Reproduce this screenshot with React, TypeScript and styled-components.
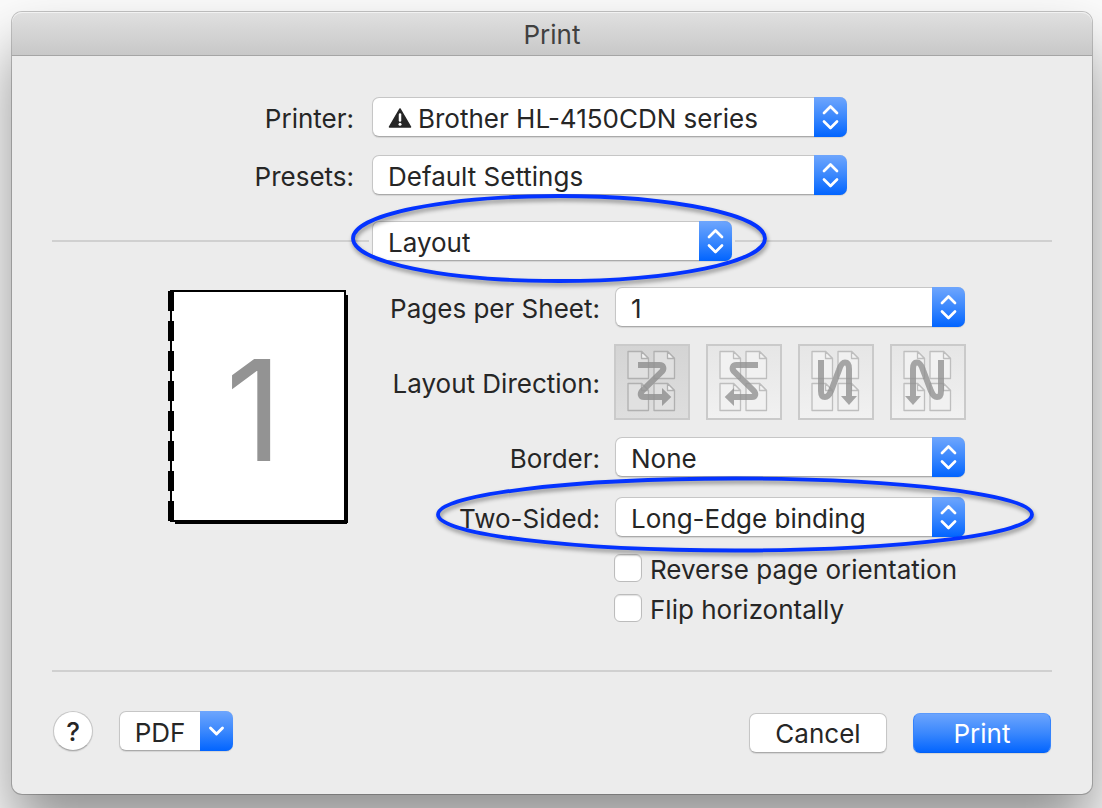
import React, { useId } from "react";
import styled, { createGlobalStyle, css } from "styled-components";

const GlobalStyle = createGlobalStyle`
  *, *::before, *::after { box-sizing: border-box; }
  body {
    margin: 0;
    background: #fbfbfb;
    color: #262626;
    font-family: Inter, "Liberation Sans", sans-serif;
    font-size: 26px;
    line-height: 30px;
  }
  button, select, input { font: inherit; color: inherit; margin: 0; }
`;

const blueFill = "linear-gradient(#6ea6fd, #3b88fd 50%, #0164ff)";

const Stage = styled.div`
  padding: 12px 10px 14px 12px;
  overflow: hidden;
`;

const Dialog = styled.main`
  border-radius: 10px;
  background: #ececec;
  box-shadow: 0 0 0 1px rgba(0, 0, 0, 0.22), 0 36px 60px rgba(0, 0, 0, 0.42);
`;

const TitleBar = styled.header`
  height: 44px;
  padding-top: 8px;
  border-radius: 10px 10px 0 0;
  border-bottom: 1px solid #a5a5a5;
  background: linear-gradient(#e0e0e0, #c8c8c8);
  box-shadow: inset 0 1px 0 #f2f2f2;
  text-align: center;
`;

const Title = styled.h1`
  margin: 0;
  font-size: 26px;
  font-weight: 400;
  line-height: 30px;
  color: #404040;
`;

const Body = styled.form`
  padding: 41px 40px;
`;

const Rows = styled.div<{ $gap: number }>`
  display: flex;
  flex-direction: column;
  gap: ${(p) => p.$gap}px;
`;

const Row = styled.div<{ $label: number; $gap: number }>`
  display: grid;
  grid-template-columns: ${(p) => p.$label}px minmax(0, 1fr);
  column-gap: ${(p) => p.$gap}px;
  align-items: center;
`;

const Label = styled.label`
  padding-top: 4px;
  text-align: right;
  white-space: nowrap;
`;

const Caption = styled.span`
  padding-top: 4px;
  text-align: right;
  white-space: nowrap;
`;

const Popup = styled.div<{ $width: number }>`
  position: relative;
  flex: none;
  width: ${(p) => p.$width}px;
  height: 40px;
`;

const raised = css`
  border: 1px solid #c6c6c6;
  border-bottom-color: #aaa;
  border-radius: 7px;
  background: #fff;
  box-shadow: 0 1px 1px rgba(0, 0, 0, 0.1);
`;

const Select = styled.select<{ $icon?: boolean }>`
  ${raised}
  appearance: none;
  display: block;
  width: 100%;
  height: 40px;
  padding: 4px 40px 0 ${(p) => (p.$icon ? 45 : 15)}px;
`;

const Cap = styled.span<{ $inset?: number }>`
  position: absolute;
  top: -${(p) => p.$inset ?? 0}px;
  right: -${(p) => p.$inset ?? 0}px;
  display: grid;
  place-items: center;
  width: 33px;
  height: 40px;
  border-radius: 0 7px 7px 0;
  background: ${blueFill};
  pointer-events: none;
`;

const PopupIcon = styled.span`
  position: absolute;
  top: 11px;
  left: 16px;
  display: flex;
  pointer-events: none;
`;

const SectionRow = styled.div`
  display: flex;
  align-items: center;
  gap: 3px;
  margin: 26px 0;
`;

const Line = styled.span<{ $width?: number }>`
  ${(p) => (p.$width ? `flex: none; width: ${p.$width}px;` : "flex: 1;")}
  height: 2px;
  background: #d0d0d0;
`;

const Pane = styled.section`
  display: grid;
  grid-template-columns: 302px minmax(0, 1fr);
  align-items: start;
`;

const Preview = styled.div`
  padding: 3px 0 0 116px;
`;

const Directions = styled.div`
  display: flex;
  gap: 16px;
  margin-left: -1px;
`;

const DirectionButton = styled.button<{ $active: boolean }>`
  width: 76px;
  height: 76px;
  padding: 0;
  border: 2px solid #cacaca;
  background: ${(p) =>
    p.$active ? "linear-gradient(#d4d4d4, #dedede)" : "linear-gradient(#e6e6e6, #f1f1f1)"};
`;

const Checks = styled.div`
  display: flex;
  flex-direction: column;
  gap: 12px;
  padding-left: 260px;
`;

const CheckLabel = styled.label`
  display: flex;
  align-items: center;
  gap: 8px;
  height: 28px;
  white-space: nowrap;
`;

const CheckText = styled.span`
  padding-top: 4px;
`;

const Checkbox = styled.input`
  appearance: none;
  width: 28px;
  height: 28px;
  border: 1px solid #bcbcbc;
  border-radius: 6px;
  background: #fff;
  box-shadow: inset 0 1px 1px rgba(0, 0, 0, 0.12);
`;

const Divider = styled.hr`
  height: 2px;
  margin: 48px 0 39px;
  border: 0;
  background: #d0d0d0;
`;

const Footer = styled.footer`
  display: flex;
  align-items: flex-start;
`;

const HelpButton = styled.button`
  ${raised}
  width: 40px;
  height: 40px;
  margin: 0 26px 0 1px;
  padding: 2px 0 0;
  border-radius: 50%;
  font-weight: 500;
`;

const PdfButton = styled.button`
  ${raised}
  position: relative;
  width: 114px;
  height: 40px;
  padding: 4px 32px 0 0;
  text-align: center;
`;

const Actions = styled.div`
  display: flex;
  gap: 26px;
  margin: 2px 1px 0 auto;
`;

const ActionButton = styled.button<{ $primary?: boolean }>`
  ${raised}
  width: 138px;
  height: 40px;
  padding: 2px 0 0;
  ${(p) =>
    p.$primary &&
    css`
      border-color: #5b9afc #3583fc #0160f5;
      background: ${blueFill};
      background-origin: border-box;
      color: #fff;
    `}
`;

const Ring = styled.svg<{ $left: number; $top: number }>`
  position: absolute;
  left: ${(p) => p.$left}px;
  top: ${(p) => p.$top}px;
  z-index: 2;
  pointer-events: none;
  filter: drop-shadow(1px 3px 2px rgba(0, 0, 0, 0.4));
`;

function UpDown() {
  return (
    <svg width="17" height="26" viewBox="0 0 17 26" fill="none" stroke="#fff" strokeWidth="2.7" strokeLinecap="round" strokeLinejoin="round" aria-hidden="true">
      <path d="M2 9L8.500 2.500L15 9M2 17.500L8.500 24L15 17.500" />
    </svg>
  );
}

function Down() {
  return (
    <svg width="17" height="12" viewBox="0 0 17 12" fill="none" stroke="#fff" strokeWidth="2.900" strokeLinecap="round" strokeLinejoin="round" aria-hidden="true">
      <path d="M2.500 3L8.500 9L14.500 3" />
    </svg>
  );
}

function Warning() {
  return (
    <svg width="24" height="20" viewBox="0 0 24 20" aria-hidden="true">
      <path d="M12 1L22.500 19H1.500Z" fill="#262626" stroke="#262626" strokeWidth="1.500" strokeLinejoin="round" />
      <path d="M12 6.500V12.500" stroke="#fff" strokeWidth="2.500" strokeLinecap="round" />
      <circle cx="12" cy="16.300" r="1.500" fill="#fff" />
    </svg>
  );
}

type PopupSelectProps = {
  id: string;
  value: string;
  width: number;
  icon?: React.ReactNode;
  ariaLabel?: string;
  children?: React.ReactNode;
};

function PopupSelect({ id, value, width, icon, ariaLabel, children }: PopupSelectProps) {
  return (
    <Popup $width={width}>
      <Select id={id} $icon={!!icon} defaultValue={value} aria-label={ariaLabel}>
        <option>{value}</option>
      </Select>
      {icon && <PopupIcon>{icon}</PopupIcon>}
      <Cap>
        <UpDown />
      </Cap>
      {children}
    </Popup>
  );
}

type FieldProps = Omit<PopupSelectProps, "id"> & { label: string; labelWidth: number; gap: number };

function Field({ label, labelWidth, gap, ...popup }: FieldProps) {
  const id = useId();
  return (
    <Row $label={labelWidth} $gap={gap}>
      <Label htmlFor={id}>{label}</Label>
      <PopupSelect id={id} {...popup} />
    </Row>
  );
}

function Check({ label }: { label: string }) {
  return (
    <CheckLabel>
      <Checkbox type="checkbox" />
      <CheckText>{label}</CheckText>
    </CheckLabel>
  );
}

const sheets = [
  [13, 7],
  [39, 7],
  [13, 39],
  [39, 39],
];

const zPath = "M24 21H45.500C49.500 21 50.500 24.500 48 27.500L28.500 46.500C25.500 50 26.500 53 30 53H48";
const zHead = "M48 44L57.300 53L48 62Z";
const nPath = "M23 16V47C23 51 24 53 27 53C30 53 31.500 50.500 33 47L41 26C42.500 21.500 44 18.500 47 18.500C50 18.500 51 21 51 25V53";
const nHead = "M43 52H59L51 61Z";

const directions = [
  { name: "Left to right, then down", path: zPath, head: zHead, flip: undefined },
  { name: "Right to left, then down", path: zPath, head: zHead, flip: "translate(76 0) scale(-1 1)" },
  { name: "Down, then left to right", path: nPath, head: nHead, flip: undefined },
  { name: "Down, then right to left", path: nPath, head: nHead, flip: "translate(74 0) scale(-1 1)" },
];

function DirectionIcon({ path, head, flip, active }: { path: string; head: string; flip?: string; active: boolean }) {
  return (
    <svg width="72" height="72" viewBox="2 2 72 72" aria-hidden="true" display="block">
      {sheets.map(([x, y]) => (
        <g key={`${x}-${y}`} transform={`translate(${x} ${y})`} stroke={active ? "#b0b0b0" : "#bebebe"} strokeWidth="1.300" strokeLinejoin="round">
          <path d="M1 .5H14.500L21.500 7.500V27.500H1Z" fill={active ? "#e0e0e0" : "#f1f1f1"} />
          <path d="M14.500 .5V7.500H21.500Z" fill="#f3f3f3" />
        </g>
      ))}
      <g transform={flip} opacity={active ? 0.85 : 0.8}>
        <path d={path} fill="none" stroke="#939393" strokeWidth="6" />
        <path d={head} fill="#939393" />
      </g>
    </svg>
  );
}

function PagePreview() {
  return (
    <svg width="180" height="234" viewBox="0 0 180 234" display="block" role="img" aria-label="Page 1 preview">
      <path d="M7 232H178V5H180V233H179V234H7Z" fill="#000" />
      <rect x="3" y="1" width="174" height="230" fill="#fff" stroke="#000" strokeWidth="2" />
      <path d="M3 1V231" stroke="#000" strokeWidth="6" strokeDasharray="20 10" />
      <text x="86" y="171" textAnchor="middle" fontFamily="Inter, sans-serif" fontSize="140" fill="#939393">
        1
      </text>
    </svg>
  );
}

export default function App() {
  const sectionId = useId();
  return (
    <Stage>
      <GlobalStyle />
      <Dialog>
        <TitleBar>
          <Title>Print</Title>
        </TitleBar>
        <Body onSubmit={(e) => e.preventDefault()}>
          <Rows $gap={18}>
            <Field label="Printer:" labelWidth={302} gap={18} width={475} value="Brother HL-4150CDN series" icon={<Warning />} />
            <Field label="Presets:" labelWidth={302} gap={18} width={475} value="Default Settings" />
          </Rows>
          <SectionRow>
            <Line $width={317} />
            <PopupSelect id={sectionId} width={360} value="Layout" ariaLabel="Options">
              <Ring $left={-24} $top={-30} width="424" height="96" aria-hidden="true">
                <ellipse cx="211" cy="47.500" rx="206" ry="42.500" fill="none" stroke="#0433ff" strokeWidth="3.800" />
              </Ring>
            </PopupSelect>
            <Line />
          </SectionRow>
          <Pane>
            <Preview>
              <PagePreview />
            </Preview>
            <Rows $gap={17}>
              <Field label="Pages per Sheet:" labelWidth={246} gap={15} width={350} value="1" />
              <Row $label={246} $gap={15}>
                <Caption id="direction-label">Layout Direction:</Caption>
                <Directions role="group" aria-labelledby="direction-label">
                  {directions.map((d, i) => (
                    <DirectionButton key={d.name} type="button" $active={i === 0} aria-pressed={i === 0} aria-label={d.name}>
                      <DirectionIcon path={d.path} head={d.head} flip={d.flip} active={i === 0} />
                    </DirectionButton>
                  ))}
                </Directions>
              </Row>
              <Rows $gap={20}>
                <Field label="Border:" labelWidth={246} gap={15} width={350} value="None" />
                <Field label="Two-Sided:" labelWidth={246} gap={15} width={350} value="Long-Edge binding">
                  <Ring $left={-181} $top={-25} width="604" height="88" aria-hidden="true">
                    <ellipse cx="301" cy="42.500" rx="297" ry="36" fill="none" stroke="#0433ff" strokeWidth="3.800" />
                  </Ring>
                </Field>
              </Rows>
              <Checks>
                <Check label="Reverse page orientation" />
                <Check label="Flip horizontally" />
              </Checks>
            </Rows>
          </Pane>
          <Divider />
          <Footer>
            <HelpButton type="button" aria-label="Help">
              ?
            </HelpButton>
            <PdfButton type="button">
              PDF
              <Cap $inset={1}>
                <Down />
              </Cap>
            </PdfButton>
            <Actions>
              <ActionButton type="button">Cancel</ActionButton>
              <ActionButton type="submit" $primary>
                Print
              </ActionButton>
            </Actions>
          </Footer>
        </Body>
      </Dialog>
    </Stage>
  );
}
